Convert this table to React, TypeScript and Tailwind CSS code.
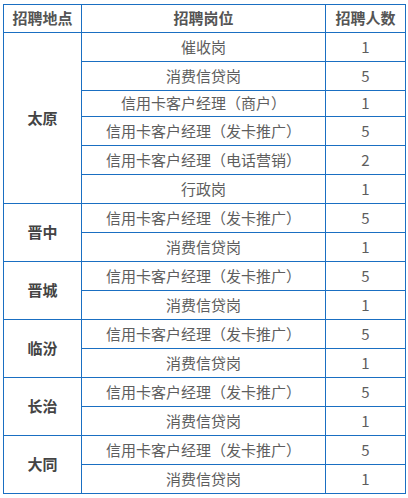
import React from "react";

type Group = { city: string; rows: [string, number][] };

const groups: Group[] = [
  {
    city: "太原",
    rows: [
      ["催收岗", 1],
      ["消费信贷岗", 5],
      ["信用卡客户经理（商户）", 1],
      ["信用卡客户经理（发卡推广）", 5],
      ["信用卡客户经理（电话营销）", 2],
      ["行政岗", 1],
    ],
  },
  { city: "晋中", rows: [["信用卡客户经理（发卡推广）", 5], ["消费信贷岗", 1]] },
  { city: "晋城", rows: [["信用卡客户经理（发卡推广）", 5], ["消费信贷岗", 1]] },
  { city: "临汾", rows: [["信用卡客户经理（发卡推广）", 5], ["消费信贷岗", 1]] },
  { city: "长治", rows: [["信用卡客户经理（发卡推广）", 5], ["消费信贷岗", 1]] },
  { city: "大同", rows: [["信用卡客户经理（发卡推广）", 5], ["消费信贷岗", 1]] },
];

const cell = "border border-[#1a6fc2] text-center p-0 align-middle";

export default function App() {
  let idx = 0;
  return (
    <div
      className="w-[408px] h-[498px] bg-white pl-[3px] pt-[4px]"
      style={{ fontFamily: '"Microsoft YaHei", "Noto Sans CJK SC", sans-serif' }}
    >
      <table className="border-collapse table-fixed w-[402px] text-[15px] text-[#5e5e5e]">
        <colgroup>
          <col className="w-[78px]" />
          <col className="w-[244px]" />
          <col className="w-[80px]" />
        </colgroup>
        <thead>
          <tr className="h-[28px]">
            <th className={`${cell} font-bold text-[#555]`}>招聘地点</th>
            <th className={`${cell} font-bold text-[#555]`}>招聘岗位</th>
            <th className={`${cell} font-bold text-[#555]`}>招聘人数</th>
          </tr>
        </thead>
        <tbody>
          {groups.map((g) =>
            g.rows.map(([pos, n], i) => {
              const h = idx === 2 ? "h-[26px]" : "h-[29px]";
              idx++;
              return (
                <tr key={g.city + i} className={h}>
                  {i === 0 && (
                    <td rowSpan={g.rows.length} className={`${cell} font-bold text-[#444]`}>
                      {g.city}
                    </td>
                  )}
                  <td className={cell}>{pos}</td>
                  <td className={cell}>{n}</td>
                </tr>
              );
            })
          )}
        </tbody>
      </table>
    </div>
  );
}
